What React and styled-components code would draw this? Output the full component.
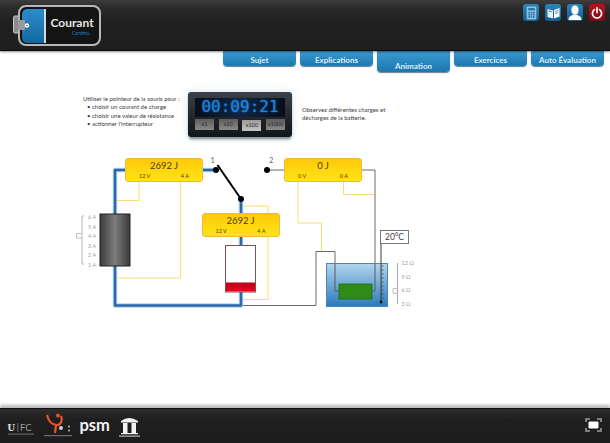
import React from 'react';
import styled, { createGlobalStyle } from 'styled-components';

const GlobalStyle = createGlobalStyle`
  html, body {
    margin: 0;
    padding: 0;
    background: #ffffff;
    font-family: "Lato", "Liberation Sans", sans-serif;
  }
`;

const Page = styled.div`
  width: 610px;
  height: 443px;
  display: flex;
  flex-direction: column;
  overflow: hidden;
  background: #ffffff;
`;

const Header = styled.header`
  height: 51px;
  flex: none;
  display: flex;
  justify-content: space-between;
  padding: 4px 5px 0 13px;
  box-sizing: border-box;
  background: linear-gradient(#3c3c3c 0, #2a2a2a 8px, #202020 22px, #1f1f1f 100%);
  border-bottom: 1px solid #0b0b0b;
  box-shadow: 0 1px 2px rgba(0, 0, 0, 0.45);
  position: relative;
  z-index: 2;
`;

const Toolbar = styled.div`
  display: flex;
  gap: 6px;
  height: 17px;
`;

const ToolButton = styled.div`
  width: 16px;
  height: 17px;
  border-radius: 3px;
  display: flex;
  align-items: center;
  justify-content: center;
  background: ${(p) => (p.$danger
    ? 'linear-gradient(#b5141d, #7d0a10)'
    : 'linear-gradient(#2a86bd, #125f90)')};
`;

const TabBar = styled.nav`
  height: 21px;
  flex: none;
  display: flex;
  justify-content: flex-end;
  align-items: flex-start;
  gap: 4px;
  padding-right: 6px;
`;

const Tab = styled.div`
  width: 73px;
  height: ${(p) => (p.$active ? '21px' : '15px')};
  box-sizing: border-box;
  padding-bottom: 1px;
  display: flex;
  align-items: flex-end;
  justify-content: center;
  color: #dcedf7;
  font-size: 8px;
  font-weight: 700;
  border-radius: 0 0 4px 4px;
  background: linear-gradient(#3d9ad2, #1b77ad);
  box-shadow: 0 1px 1px rgba(15, 60, 90, 0.65);
`;

const Intro = styled.section`
  height: 78px;
  flex: none;
  display: flex;
  padding-left: 83px;
  color: #3a3a3a;
  font-size: 6px;
  line-height: 8.3px;
`;

const Instructions = styled.div`
  width: 105px;
  flex: none;
  padding-top: 23px;
`;

const BulletList = styled.ul`
  margin: 0;
  padding: 0 0 0 9px;
  list-style: none;
`;

const Bullet = styled.li`
  position: relative;
  &::before {
    content: '•';
    position: absolute;
    left: -5px;
  }
`;

const Timer = styled.div`
  width: 104px;
  height: 45px;
  flex: none;
  margin-top: 20px;
  box-sizing: border-box;
  padding: 6px 7px 0;
  border-radius: 3px;
  background: linear-gradient(#3a4148, #1c2025 70%, #14171a);
  box-shadow: 0 0 9px rgba(150, 205, 235, 0.45), 0 3px 3px -1px rgba(0, 0, 0, 0.55);
`;

const Display = styled.div`
  height: 19px;
  display: flex;
  align-items: center;
  justify-content: center;
  font-family: "DejaVu Sans Mono", "Liberation Mono", monospace;
  font-size: 16px;
  font-weight: 400;
  color: #1a86e0;
  text-shadow: 0 0 2px rgba(30, 130, 230, 0.8);
  background: linear-gradient(90deg, #080d18, #0f2544 50%, #080d18);
`;

const SpeedRow = styled.div`
  display: flex;
  justify-content: space-between;
  margin-top: 2px;
`;

const SpeedButton = styled.div`
  width: 19px;
  height: 11px;
  margin-top: ${(p) => (p.$active ? '1px' : '0')};
  display: flex;
  align-items: center;
  justify-content: center;
  font-size: 5.5px;
  color: #2b2b2b;
  background: ${(p) => (p.$active
    ? 'linear-gradient(#9c9c9c, #c4c4c4)'
    : 'linear-gradient(#5d5d5d, #8a8a8a)')};
`;

const Note = styled.p`
  margin: 34px 0 0 10px;
  width: 96px;
`;

const Canvas = styled.section`
  position: relative;
  height: 170px;
  flex: none;
`;

const Wires = styled.svg`
  position: absolute;
  left: 0;
  top: 0;
  width: 610px;
  height: 170px;
`;

const Meter = styled.div`
  position: absolute;
  left: ${(p) => p.$x}px;
  top: ${(p) => p.$y - 150}px;
  width: 78px;
  height: 24px;
  box-sizing: border-box;
  padding-top: 1px;
  color: #4a3c00;
  text-align: center;
  border: 1px solid #f5b735;
  border-radius: 3px;
  background: linear-gradient(#ffc90c, #ffe414);
`;

const Energy = styled.div`
  font-size: 9.5px;
  line-height: 12px;
`;

const Readings = styled.div`
  display: flex;
  justify-content: space-between;
  margin-top: 1px;
  padding: 0 13px;
  font-size: 5.5px;
  line-height: 7px;
`;

const TempBox = styled.div`
  position: absolute;
  left: 380px;
  top: 80px;
  width: 29px;
  height: 14px;
  box-sizing: border-box;
  display: flex;
  align-items: center;
  justify-content: center;
  font-size: 8.5px;
  color: #444444;
  background: #ffffff;
  border: 1px solid #777777;
`;

const Footer = styled.footer`
  margin-top: auto;
  height: 35px;
  flex: none;
  display: flex;
  justify-content: space-between;
  align-items: flex-start;
  padding-right: 8px;
  box-sizing: border-box;
  background: linear-gradient(#2e2e2e, #1f1f1f 30%, #1c1c1c);
  border-top: 1px solid #111111;
  box-shadow: 0 -3px 3px rgba(0, 0, 0, 0.28);
`;

const LogoStrip = styled.svg`
  width: 148px;
  height: 34px;
`;

const FullscreenButton = styled.div`
  display: flex;
  margin-top: 9px;
`;

const METERS = [
  { x: 125, y: 158, energy: '2692 J', u: '12 V', i: '4 A' },
  { x: 201.5, y: 212.5, energy: '2692 J', u: '12 V', i: '4 A' },
  { x: 284, y: 158, energy: '0 J', u: '0 V', i: '0 A' },
];

const SPEEDS = ['x1', 'x10', 'x100', 'x1000'];
const AMPS = ['6 A', '5 A', '4 A', '3 A', '2 A', '1 A'];
const OHMS = ['12 Ω', '9 Ω', '6 Ω', '3 Ω'];

const BatteryLogo = () => (
  <svg width="90" height="43" viewBox="13 4 90 43">
    <defs>
      <linearGradient id="cell" x1="0" y1="0" x2="0" y2="1">
        <stop offset="0" stopColor="#2c8ccb" />
        <stop offset="1" stopColor="#13699f" />
      </linearGradient>
    </defs>
    <rect x="13.5" y="16" width="6" height="17" rx="1.5" fill="#8d8d8d" stroke="#c9c9c9" />
    <rect x="19" y="6" width="81" height="39" rx="7" fill="#141414" stroke="#b8b8b8" strokeWidth="2" />
    <path d="M27 9 H44 V43 H27 a6 6 0 0 1 -5 -5 V14 a6 6 0 0 1 5 -5 Z" fill="url(#cell)" />
    <rect x="44" y="9" width="2" height="34" fill="#d8d8d8" />
    <rect x="18" y="20" width="7" height="10" fill="#9b9b9b" />
    <circle cx="27" cy="25.5" r="2.2" fill="#ffffff" />
    <circle cx="27" cy="25.5" r="0.8" fill="#1c6fa5" />
    <text x="50.5" y="27" fontFamily="Lato, sans-serif" fontSize="12" fontWeight="700" fill="#e6e6e6">Courant</text>
    <text x="72" y="35" fontFamily="Lato, sans-serif" fontSize="5" fill="#1f7fc0">Continu</text>
  </svg>
);

const CalculatorIcon = () => (
  <svg width="11" height="14" viewBox="0 0 10 13">
    <rect x="0.5" y="0.5" width="9" height="12" rx="1" fill="#8fc0dc" />
    <rect x="2" y="2" width="6" height="2" fill="#1c6fa5" />
    {[5.5, 7.5, 9.5].map((y) => [2, 4.2, 6.4].map((x) => (
      <rect key={`${x}-${y}`} x={x} y={y} width="1.6" height="1.3" fill="#1c6fa5" />
    )))}
  </svg>
);

const BookIcon = () => (
  <svg width="13" height="12" viewBox="0 0 13 12">
    <path d="M0.5 2 L6 3.5 V11.5 L0.5 10 Z" fill="#e4f0f7" />
    <path d="M12.5 1 L7 3 V11.5 L12.5 9.5 Z" fill="#ffffff" />
    <path d="M8.2 4.5 L11.3 3.4 M8.2 6.5 L11.3 5.4 M1.8 4 L4.8 4.8" stroke="#1c6fa5" strokeWidth="0.8" />
  </svg>
);

const UserIcon = () => (
  <svg width="14" height="15" viewBox="0 0 14 15">
    <ellipse cx="7" cy="5" rx="3.6" ry="4.5" fill="#ffffff" />
    <path d="M0.5 15 C0.5 11 4 10.5 5.5 9.5 H8.5 C10 10.5 13.5 11 13.5 15 Z" fill="#ffffff" />
  </svg>
);

const PowerIcon = () => (
  <svg width="12" height="12" viewBox="0 0 12 12" fill="none" stroke="#ffffff" strokeWidth="1.7" strokeLinecap="round">
    <path d="M3.4 2.6 A4.6 4.6 0 1 0 8.6 2.6" />
    <path d="M6 0.9 V5.6" />
  </svg>
);

const FullscreenIcon = () => (
  <svg width="17" height="14" viewBox="0 0 17 14" fill="none">
    <path d="M1 4 V1 H5 M12 1 H16 V4 M16 10 V13 H12 M5 13 H1 V10" stroke="#9a9a9a" strokeWidth="1.6" />
    <rect x="3.5" y="3.5" width="10" height="7" rx="1" fill="#ffffff" />
  </svg>
);

// the small print under the logos can't be read in the screenshot, so it is a faint strip
const Logos = () => (
  <LogoStrip viewBox="0 408 148 34">
    {/* UFC */}
    <text x="7.5" y="430" fontFamily="Liberation Serif, serif" fontSize="10.5" fontWeight="700" fill="#e8e8e8">U</text>
    <rect x="17.5" y="422" width="0.7" height="9" fill="#888888" />
    <text x="20" y="430" fontFamily="Lato, sans-serif" fontSize="9.5" fill="#9a9a9a">FC</text>
    <rect x="8" y="432.5" width="26" height="1.2" fill="#666666" />
    {/* orange figure */}
    <path d="M47 414 C49 422 53 424 57 424 C61 424 63 419 61 415" fill="none" stroke="#e8532a" strokeWidth="2.2" />
    <path d="M56 424 L55 432" stroke="#e8532a" strokeWidth="2.2" />
    <circle cx="58" cy="414.5" r="2" fill="#e8532a" />
    <circle cx="61" cy="427" r="2" fill="#cfcfcf" />
    <circle cx="69" cy="425.5" r="0.9" fill="#cfcfcf" />
    <circle cx="69" cy="429.5" r="0.9" fill="#cfcfcf" />
    <rect x="44" y="434" width="28" height="1.2" fill="#6e6e6e" />
    {/* psm */}
    <text x="79.5" y="430" fontFamily="Lato, sans-serif" fontSize="16.5" fontWeight="700" fill="#f2f2f2">psm</text>
    {/* building */}
    <path d="M121 420 Q129 414 138 420 V421.5 H121 Z" fill="#f2f2f2" />
    <rect x="123" y="422" width="4.5" height="10" fill="#f2f2f2" />
    <rect x="131.5" y="422" width="4.5" height="10" fill="#f2f2f2" />
    <rect x="121" y="432" width="17" height="1.2" fill="#f2f2f2" />
    <rect x="119" y="434.5" width="21" height="1.3" fill="#a8a8a8" />
  </LogoStrip>
);

const Circuit = () => (
  <Wires viewBox="0 150 610 170">
    <defs>
      <linearGradient id="generator" x1="0" y1="0" x2="1" y2="0">
        <stop offset="0" stopColor="#3c3c3c" />
        <stop offset="0.5" stopColor="#7d7d7d" />
        <stop offset="1" stopColor="#3a3a3a" />
      </linearGradient>
      <linearGradient id="tank" x1="0" y1="0" x2="0" y2="1">
        <stop offset="0" stopColor="#b2d5ec" />
        <stop offset="1" stopColor="#2a7abc" />
      </linearGradient>
      <linearGradient id="heat" x1="0" y1="0" x2="0" y2="1">
        <stop offset="0" stopColor="#b80019" />
        <stop offset="1" stopColor="#f0001e" />
      </linearGradient>
    </defs>

    {/* sense wires */}
    <g fill="none" stroke="#ffdc73" strokeWidth="1">
      <path d="M139 182 V200.5 H115" />
      <path d="M180.5 182 V278 H115" />
      <path d="M241 206 H268 V299.5 H241" />
      <path d="M298 182 V223 H321.5 V252" />
      <path d="M343.5 182 V194.5 H375" />
    </g>

    {/* idle branch */}
    <g fill="none" stroke="#6b6b6b" strokeWidth="1">
      <path d="M267 170 H284" />
      <path d="M361 170 H375 V291 H372" />
      <path d="M241 305.5 H316 V251.5 H335 V291 H339" />
    </g>

    {/* live branch */}
    <g fill="none" strokeLinejoin="round">
      <path d="M216 170 H115 V305.5 H241 V199" stroke="#b5d4ee" strokeWidth="4.5" />
      <path d="M216 170 H115 V305.5 H241 V199" stroke="#2a68aa" strokeWidth="2.5" />
    </g>

    {/* switch */}
    <path d="M217.5 165 L241 199" stroke="#000000" strokeWidth="2" />
    <circle cx="216" cy="170" r="3" fill="#000000" />
    <circle cx="241" cy="199" r="3" fill="#000000" />
    <circle cx="267" cy="170" r="3" fill="#000000" />
    <text x="210.5" y="163" fontFamily="Lato, sans-serif" fontSize="7.5" fill="#666666">1</text>
    <text x="269" y="163" fontFamily="Lato, sans-serif" fontSize="7.5" fill="#666666">2</text>

    {/* generator */}
    <rect x="100" y="214" width="30" height="52" fill="url(#generator)" stroke="#222222" strokeWidth="1" />
    <path d="M84 216 H82 V264 H84" fill="none" stroke="#b8b8b8" strokeWidth="1" />
    <path d="M82 233.5 H76.5 V238 H82" fill="none" stroke="#b0b0b0" strokeWidth="0.8" />
    {AMPS.map((label, i) => (
      <text key={label} x="88" y={219 + i * 9.6} fontFamily="Lato, sans-serif" fontSize="5.5" fill="#a0a0a0">{label}</text>
    ))}

    {/* resistor */}
    <rect x="225.5" y="245.5" width="30" height="46.5" fill="#ffffff" stroke="#84504f" strokeWidth="1" />
    <rect x="226" y="282.5" width="29" height="9" fill="url(#heat)" />

    {/* tank */}
    <rect x="326.5" y="263.5" width="61" height="43" fill="url(#tank)" stroke="#4d86b4" strokeWidth="1" />
    <path d="M335 263.5 V291 H339 M375 263.5 V291 H372" fill="none" stroke="#5a5a5a" strokeWidth="1" />
    <rect x="339" y="284" width="33" height="15" fill="#2f8a17" stroke="#1f6a10" strokeWidth="0.8" />
    <path d="M381 243 V302" stroke="#3a3a3a" strokeWidth="1" />
    {[266, 270, 274, 278, 282, 286, 290, 294, 298].map((y) => (
      <path key={y} d={`M381 ${y} H383.5`} stroke="#3a3a3a" strokeWidth="0.7" />
    ))}
    <circle cx="381" cy="302" r="1.4" fill="#000000" />
    <path d="M397.5 263 V304" stroke="#b0b0b0" strokeWidth="1.2" />
    <path d="M397 288.5 H393 V293.5 H397" fill="none" stroke="#b0b0b0" strokeWidth="0.8" />
    {OHMS.map((label, i) => (
      <text key={label} x="401.5" y={265 + i * 13.5} fontFamily="Lato, sans-serif" fontSize="5.5" fill="#a0a0a0">{label}</text>
    ))}
  </Wires>
);

export default function App() {
  return (
    <Page>
      <GlobalStyle />
      <Header>
        <BatteryLogo />
        <Toolbar>
          <ToolButton><CalculatorIcon /></ToolButton>
          <ToolButton><BookIcon /></ToolButton>
          <ToolButton><UserIcon /></ToolButton>
          <ToolButton $danger><PowerIcon /></ToolButton>
        </Toolbar>
      </Header>

      <TabBar>
        <Tab>Sujet</Tab>
        <Tab>Explications</Tab>
        <Tab $active>Animation</Tab>
        <Tab>Exercices</Tab>
        <Tab>Auto Évaluation</Tab>
      </TabBar>

      <Intro>
        <Instructions>
          Utiliser le pointeur de la souris pour :
          <BulletList>
            <Bullet>choisir un courant de charge</Bullet>
            <Bullet>choisir une valeur de résistance</Bullet>
            <Bullet>actionner l'interrupteur</Bullet>
          </BulletList>
        </Instructions>
        <Timer>
          <Display>00:09:21</Display>
          <SpeedRow>
            {SPEEDS.map((s) => (
              <SpeedButton key={s} $active={s === 'x100'}>{s}</SpeedButton>
            ))}
          </SpeedRow>
        </Timer>
        <Note>Observez différentes charges et décharges de la batterie.</Note>
      </Intro>

      <Canvas>
        <Circuit />
        {METERS.map((m) => (
          <Meter key={m.x} $x={m.x} $y={m.y}>
            <Energy>{m.energy}</Energy>
            <Readings>
              <span>{m.u}</span>
              <span>{m.i}</span>
            </Readings>
          </Meter>
        ))}
        <TempBox>20°C</TempBox>
      </Canvas>

      <Footer>
        <Logos />
        <FullscreenButton>
          <FullscreenIcon />
        </FullscreenButton>
      </Footer>
    </Page>
  );
}
